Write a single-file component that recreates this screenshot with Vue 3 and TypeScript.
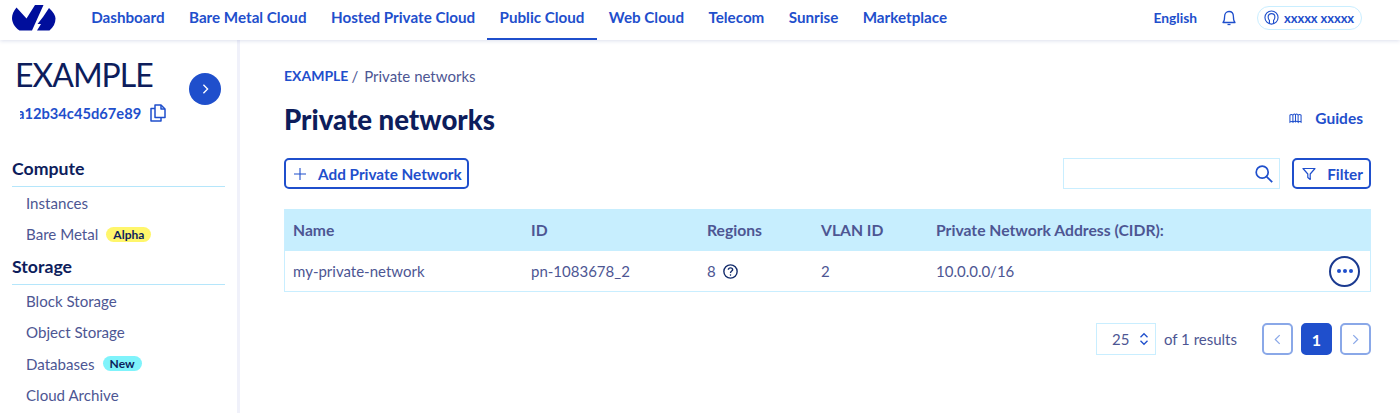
<template>
  <div class="page">
    <header class="topbar">
      <svg class="logo" viewBox="0 0 44 26" width="44" height="26">
        <path d="M4.5 2.5 C1.5 6 0 9.5 0 13 C0 17.5 2.5 22 7.5 25.5 L20 25.5 L31.5 0 L23 0 L14.5 13.5 Z" fill="#000e9c" />
        <path d="M37 3 C41.5 7 43.5 10.5 43.5 13.5 C43.5 18 41.5 22 37.5 25.5 L25 25.5 L29 19 L25.5 19 L31 12 Z" fill="#000e9c" />
      </svg>
      <nav class="nav">
        <a v-for="item in navItems" :key="item" class="nav-item" :class="{ active: item === 'Public Cloud' }">{{ item }}</a>
      </nav>
      <div class="top-right">
        <span class="lang">English</span>
        <svg class="bell" viewBox="0 0 14 16" width="14" height="16" fill="none" stroke="#1f4fcc" stroke-width="1.3">
          <path d="M1 12.5 C2.5 11 2.6 9 2.6 6.5 C2.6 3.5 4.5 1.5 7 1.5 C9.5 1.5 11.4 3.5 11.4 6.5 C11.4 9 11.5 11 13 12.5 Z" stroke-linejoin="round" />
          <path d="M5.5 14.5 H8.5" />
        </svg>
        <div class="user-pill">
          <svg viewBox="0 0 16 16" width="15" height="15" fill="none" stroke="#1f4fcc" stroke-width="1.2">
            <circle cx="8" cy="8" r="7" />
            <path d="M5.8 14.5 V11 C4.6 10 4.4 8.8 4.4 7.4 C4.4 5.3 6 3.8 8 3.8 C10 3.8 11.6 5.3 11.6 7.4 C11.6 8.8 11.4 10 10.2 11 V14.5" />
          </svg>
          <span>xxxxx xxxxx</span>
        </div>
      </div>
    </header>

    <div class="body">
      <aside class="sidebar">
        <div class="project">
          <div class="project-text">
            <div class="project-name">EXAMPLE</div>
            <div class="project-id">
              <span class="id-clip"><span class="id-inner">a12b34c45d67e89</span></span>
              <svg viewBox="0 0 16 18" width="16" height="18" fill="none" stroke="#1f4fcc" stroke-width="1.5">
                <path d="M5 1 H11 L15 5 V13.5 H5 Z" stroke-linejoin="round" />
                <path d="M11 1 V5 H15" stroke-linejoin="round" />
                <path d="M5 4.5 H1 V17 H11 V13.5" stroke-linejoin="round" />
              </svg>
            </div>
          </div>
          <button class="round-next">
            <svg viewBox="0 0 8 12" width="7" height="10" fill="none" stroke="#fff" stroke-width="1.6"><path d="M1.5 1 L6.5 6 L1.5 11" /></svg>
          </button>
        </div>

        <section v-for="group in menu" :key="group.title" class="menu-group">
          <h3 class="menu-title">{{ group.title }}</h3>
          <div v-for="entry in group.items" :key="entry.label" class="menu-item">
            <span>{{ entry.label }}</span>
            <span v-if="entry.badge" class="badge" :class="entry.badgeClass">{{ entry.badge }}</span>
          </div>
        </section>
      </aside>

      <main class="main">
        <div class="crumbs"><strong>EXAMPLE</strong><span class="sep">/</span><span>Private networks</span></div>
        <div class="title-row">
          <h1>Private networks</h1>
          <a class="guides">
            <svg viewBox="0 0 14 12" width="13" height="12" fill="none" stroke="#1f4fcc" stroke-width="1.1">
              <path d="M1 3 C2 2 3 2 4.2 3 V10.5 C3 9.6 2 9.6 1 10.5 Z M4.2 3 C5.3 1.4 6 1.4 7 2.5 C8 1.4 8.7 1.4 9.8 3 V10.5 C8.7 9.3 8 9.3 7 10.3 C6 9.3 5.3 9.3 4.2 10.5 M9.8 3 C11 2 12 2 13 3 V10.5 C12 9.6 11 9.6 9.8 10.5 M7 2.5 V10.3" />
            </svg>
            <span>Guides</span>
          </a>
        </div>

        <div class="toolbar">
          <button class="btn">
            <svg viewBox="0 0 12 12" width="12" height="12" stroke="#1f4fcc" stroke-width="1.1"><path d="M6 0 V12 M0 6 H12" /></svg>
            <span>Add Private Network</span>
          </button>
          <div class="toolbar-right">
            <div class="search">
              <svg viewBox="0 0 18 18" width="18" height="18" fill="none" stroke="#1f4fcc" stroke-width="1.7">
                <circle cx="7.2" cy="7.2" r="6" />
                <path d="M11.6 11.6 L17.2 17.2" />
              </svg>
            </div>
            <button class="btn filter">
              <svg viewBox="0 0 14 14" width="14" height="14" fill="none" stroke="#1f4fcc" stroke-width="1.2">
                <path d="M1 1.5 H13 L8.2 7 V12.5 L5.8 10.5 V7 Z" stroke-linejoin="round" />
              </svg>
              <span>Filter</span>
            </button>
          </div>
        </div>

        <div class="table">
          <div class="row head">
            <div>Name</div><div>ID</div><div>Regions</div><div>VLAN ID</div><div>Private Network Address (CIDR):</div><div></div>
          </div>
          <div class="row">
            <div>my-private-network</div>
            <div>pn-1083678_2</div>
            <div class="regions">
              <span>8</span>
              <svg viewBox="0 0 14 14" width="15" height="15" fill="none" stroke="#122b6b" stroke-width="1.3">
                <circle cx="7" cy="7" r="6.2" />
                <path d="M5 5.4 C5 4.2 6 3.6 7 3.6 C8.2 3.6 9 4.3 9 5.3 C9 6.6 7 6.6 7 8.3" />
                <circle cx="7" cy="10.2" r="0.5" fill="#122b6b" stroke-width="0.5" />
              </svg>
            </div>
            <div>2</div>
            <div>10.0.0.0/16</div>
            <div class="actions">
              <button class="dots"><i></i><i></i><i></i></button>
            </div>
          </div>
        </div>

        <div class="pager">
          <div class="size">
            <span>25</span>
            <svg viewBox="0 0 10 16" width="10" height="14" fill="none" stroke="#1f4fcc" stroke-width="1.5"><path d="M1 6 L5 2 L9 6 M1 10 L5 14 L9 10" /></svg>
          </div>
          <span class="count">of 1 results</span>
          <button class="page-btn">
            <svg viewBox="0 0 8 12" width="7" height="11" fill="none" stroke="#8aa8e8" stroke-width="1.4"><path d="M6.5 1 L1.5 6 L6.5 11" /></svg>
          </button>
          <button class="page-btn current">1</button>
          <button class="page-btn">
            <svg viewBox="0 0 8 12" width="7" height="11" fill="none" stroke="#8aa8e8" stroke-width="1.4"><path d="M1.5 1 L6.5 6 L1.5 11" /></svg>
          </button>
        </div>
      </main>
    </div>
  </div>
</template>

<script setup lang="ts">
interface MenuEntry { label: string; badge?: string; badgeClass?: string }
interface MenuGroup { title: string; items: MenuEntry[] }

const navItems = ['Dashboard', 'Bare Metal Cloud', 'Hosted Private Cloud', 'Public Cloud', 'Web Cloud', 'Telecom', 'Sunrise', 'Marketplace']

const menu: MenuGroup[] = [
  { title: 'Compute', items: [{ label: 'Instances' }, { label: 'Bare Metal', badge: 'Alpha', badgeClass: 'alpha' }] },
  { title: 'Storage', items: [{ label: 'Block Storage' }, { label: 'Object Storage' }, { label: 'Databases', badge: 'New', badgeClass: 'new' }, { label: 'Cloud Archive' }] },
]
</script>

<style>
html, body { margin: 0; background: #fff; overflow: hidden; }
</style>

<style scoped>
*, *::before, *::after { box-sizing: border-box; margin: 0; padding: 0; }

.page { width: 1400px; height: 413px; overflow: hidden; display: flex; flex-direction: column; font-family: Lato, sans-serif; color: #4d5693; font-size: 15px; }

.topbar { height: 40px; flex-shrink: 0; display: flex; align-items: center; padding: 0 38px 0 12px; background: #fff; box-shadow: 0 1px 4px rgba(40,60,140,.16); position: relative; z-index: 2; }
.logo { flex-shrink: 0; margin-top: -4px; }
.nav { display: flex; height: 100%; margin-left: 23px; }
.nav-item { height: 100%; padding: 0 12.2px 5px; display: flex; align-items: center; color: #1f4fcc; font-weight: 700; font-size: 15.2px; border-bottom: 2px solid transparent; }
.nav-item.active { border-bottom-color: #1f4fcc; }
.top-right { margin-left: auto; display: flex; align-items: center; height: 100%; padding-bottom: 5px; }
.lang { color: #1f4fcc; font-weight: 700; font-size: 13.8px; }
.bell { margin-left: 25px; }
.user-pill { margin-left: 21px; height: 24px; padding: 0 7px 0 6px; border: 1px solid #c9eeff; border-radius: 12px; display: flex; align-items: center; gap: 5px; color: #1f4fcc; font-weight: 700; font-size: 13px; letter-spacing: -0.1px; }

.body { flex: 1; display: flex; min-height: 0; }
.sidebar { width: 240px; flex-shrink: 0; padding: 18px 12px 0; border-right: 3px solid #f0f1fa; overflow: hidden; }
.project { display: flex; align-items: center; justify-content: space-between; padding: 0 0 0 3px; margin-bottom: 35px; }
.project-name { font-size: 32px; line-height: 34px; letter-spacing: -1px; color: #0d1d5c; }
.project-id { display: flex; align-items: center; gap: 8px; margin-top: 12px; padding-left: 5px; color: #1f4fcc; font-weight: 700; font-size: 14.7px; }
.id-clip { overflow: hidden; display: block; width: 122px; white-space: nowrap; }
.id-inner { display: block; margin-left: -3px; }
.round-next { width: 32px; height: 32px; border-radius: 50%; border: none; background: #1f4fcc; display: flex; align-items: center; justify-content: center; margin: -2px 4px 0 0; }
.menu-group { margin-bottom: 5px; }
.menu-title { font-size: 17.7px; line-height: 23px; font-weight: 700; color: #0d1d5c; border-bottom: 1px solid #b5e6fb; padding-bottom: 6px; }
.menu-item { height: 31.5px; padding-left: 14px; display: flex; align-items: center; gap: 8px; font-size: 15.1px; }
.badge { height: 15px; padding: 0 7px; border-radius: 8px; font-size: 12px; line-height: 15px; font-weight: 700; color: #0d1d5c; }
.badge.alpha { background: #fff66b; }
.badge.new { background: #7ff3fb; }

.main { flex: 1; min-width: 0; padding: 26px 29px 0 44px; }
.crumbs { font-size: 15px; line-height: 20px; display: flex; align-items: center; }
.crumbs strong { color: #1f4fcc; font-weight: 700; font-size: 14px; }
.sep { margin: 0 6px 0 3px; }
.title-row { display: flex; align-items: center; justify-content: space-between; margin-top: 17px; }
h1 { font-size: 27.6px; line-height: 34px; font-weight: 900; color: #0d1d5c; }
.guides { display: flex; align-items: center; gap: 13px; color: #1f4fcc; font-weight: 700; font-size: 15.5px; margin: -4px 8px 0 0; }
.toolbar { display: flex; align-items: center; justify-content: space-between; margin-top: 21px; }
.toolbar-right { display: flex; align-items: center; gap: 12px; }
.btn { height: 31px; padding: 0 5px 0 8px; background: #fff; border: 2px solid #1f4fcc; border-radius: 5px; color: #1f4fcc; font: 700 15.3px Lato, sans-serif; display: flex; align-items: center; gap: 12px; }
.btn.filter { gap: 11px; padding-right: 6px; }
.search { width: 217px; height: 31px; border: 1px solid #c9eeff; display: flex; align-items: center; justify-content: flex-end; padding-right: 6px; }
.table { margin-top: 20px; border: 1px solid #c9eeff; border-top: none; }
.row { display: grid; grid-template-columns: 238px 176px 114px 115px 1fr 50px; align-items: center; height: 40px; padding-left: 8px; font-size: 15px; }
.row.head { height: 42px; background: #c7eefe; font-weight: 700; font-size: 15.7px; }
.regions { display: flex; align-items: center; gap: 7px; }
.actions { display: flex; justify-content: flex-end; padding-right: 10px; }
.dots { width: 31px; height: 31px; flex-shrink: 0; border-radius: 50%; background: #fff; border: 2px solid #1b3a90; display: flex; align-items: center; justify-content: center; gap: 2px; }
.dots i { width: 4px; height: 4px; border-radius: 50%; background: #1f4fcc; }
.pager { display: flex; align-items: center; justify-content: flex-end; margin-top: 31px; }
.size { width: 60px; height: 32px; border: 1px solid #c9eeff; display: flex; align-items: center; justify-content: space-between; padding: 0 6px 0 15px; font-size: 15px; margin-left: 1px; }
.count { margin: 0 25px 0 8px; font-size: 15px; }
.page-btn { width: 31px; height: 32px; border: 2px solid #8aa8e8; border-radius: 5px; background: #fff; display: flex; align-items: center; justify-content: center; margin-left: 8px; font: 700 16px Lato, sans-serif; }
.page-btn:first-of-type { margin-left: 0; }
.page-btn.current { background: #1f4fcc; border-color: #1f4fcc; color: #fff; }
</style>
